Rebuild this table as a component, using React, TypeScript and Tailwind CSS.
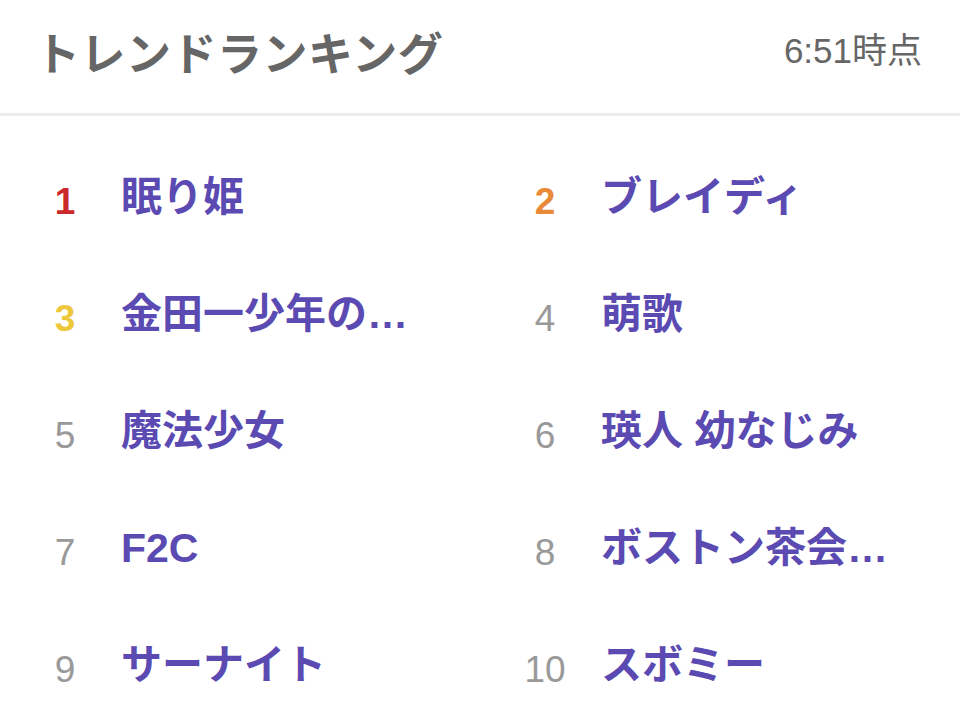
import React from 'react';

type Item = { rank: number; name: string };

const items: Item[] = [
  { rank: 1, name: '眠り姫' },
  { rank: 2, name: 'ブレイディ' },
  { rank: 3, name: '金田一少年の…' },
  { rank: 4, name: '萌歌' },
  { rank: 5, name: '魔法少女' },
  { rank: 6, name: '瑛人 幼なじみ' },
  { rank: 7, name: 'F2C' },
  { rank: 8, name: 'ボストン茶会…' },
  { rank: 9, name: 'サーナイト' },
  { rank: 10, name: 'スボミー' },
];

function rankClass(rank: number) {
  if (rank === 1) return 'text-[#cc2a2a] font-bold';
  if (rank === 2) return 'text-[#e98a38] font-bold';
  if (rank === 3) return 'text-[#ecc83a] font-bold';
  return 'text-[#999999] font-normal';
}

export default function App() {
  return (
    <div className="w-[960px] h-[723px] bg-white overflow-hidden font-['Liberation_Sans','Noto_Sans_CJK_JP',sans-serif]">
      <div className="h-[116px] flex items-center justify-between pl-[35px] pr-[38px] pb-[10px] border-b-[3px] border-[#ececec]">
        <h1 className="text-[45px] font-bold text-[#666666] font-['Noto_Sans_CJK_JP',sans-serif] tracking-[0.5px]">
          トレンドランキング
        </h1>
        <span className="text-[35px] text-[#666666]">6:51時点</span>
      </div>
      <ul className="grid grid-cols-2 pt-[23px]">
        {items.map((it) => (
          <li key={it.rank} className="h-[117px] flex items-center pl-[40px]">
            <span className={`w-[50px] text-center text-[37px] leading-none mt-[8px] ${rankClass(it.rank)}`}>
              {it.rank}
            </span>
            <span className="ml-[31px] text-[41px] font-bold text-[#5a4ab2] leading-none whitespace-nowrap">
              {it.name}
            </span>
          </li>
        ))}
      </ul>
    </div>
  );
}
